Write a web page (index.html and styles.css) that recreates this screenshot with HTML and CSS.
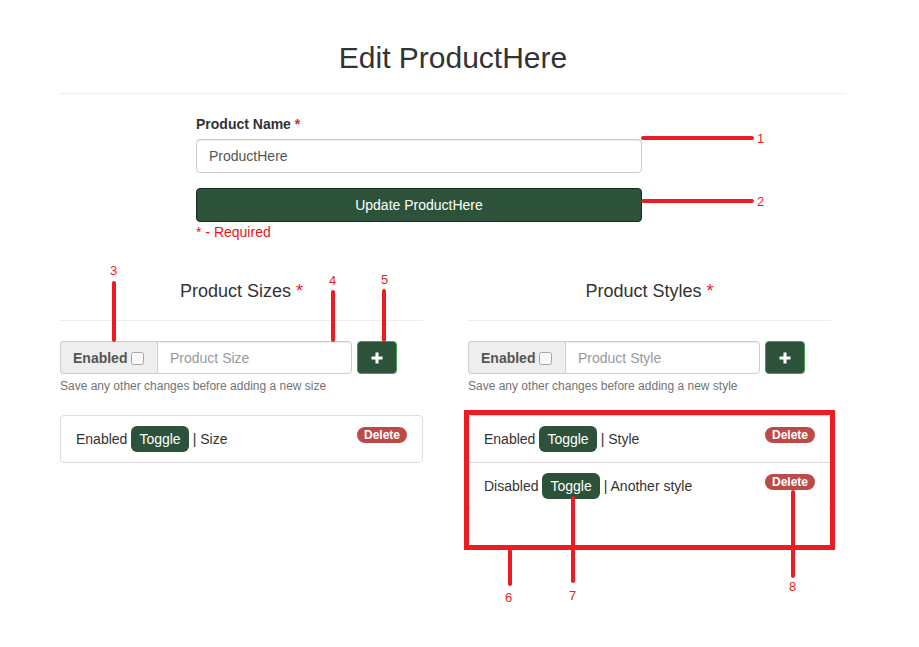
FILE: index.html
```html
<!DOCTYPE html>
<html>
<head>
<meta charset="utf-8">
<link rel="stylesheet" href="styles.css">
</head>
<body>
<div class="container">
  <div class="page-header"><h1>Edit ProductHere</h1></div>

  <div class="name-form">
    <label class="field-label">Product Name <span class="req">*</span></label>
    <input class="text-input" type="text" value="ProductHere">
    <button class="update-btn">Update ProductHere</button>
    <div class="req-note">* - Required</div>
  </div>

  <div class="columns">
    <div class="col">
      <h4 class="col-title">Product Sizes <span class="req">*</span></h4>
      <hr class="col-rule">
      <div class="add-row">
        <div class="input-group">
          <span class="addon">Enabled <input type="checkbox" class="chk"></span>
          <input class="group-input" type="text" placeholder="Product Size">
        </div>
        <button class="plus-btn"><svg width="14" height="14" viewBox="0 0 14 14"><path d="M7 1.5v11M1.5 7h11" stroke="#fff" stroke-width="3"/></svg></button>
      </div>
      <div class="help">Save any other changes before adding a new size</div>
      <ul class="list-group">
        <li class="list-item"><span>Enabled</span><button class="toggle-btn">Toggle</button><span>| Size</span><span class="badge">Delete</span></li>
      </ul>
    </div>
    <div class="col">
      <h4 class="col-title">Product Styles <span class="req">*</span></h4>
      <hr class="col-rule">
      <div class="add-row">
        <div class="input-group">
          <span class="addon">Enabled <input type="checkbox" class="chk"></span>
          <input class="group-input" type="text" placeholder="Product Style">
        </div>
        <button class="plus-btn"><svg width="14" height="14" viewBox="0 0 14 14"><path d="M7 1.5v11M1.5 7h11" stroke="#fff" stroke-width="3"/></svg></button>
      </div>
      <div class="help">Save any other changes before adding a new style</div>
      <ul class="list-group">
        <li class="list-item"><span>Enabled</span><button class="toggle-btn">Toggle</button><span>| Style</span><span class="badge">Delete</span></li>
        <li class="list-item"><span>Disabled</span><button class="toggle-btn">Toggle</button><span>| Another style</span><span class="badge">Delete</span></li>
      </ul>
    </div>
  </div>
</div>

<div class="ann hline" style="left:641px;top:136px;width:113px"></div>
<div class="ann-num" style="left:757px;top:131px">1</div>
<div class="ann hline" style="left:641px;top:199px;width:113px"></div>
<div class="ann-num" style="left:757px;top:194px">2</div>
<div class="ann vline" style="left:112px;top:281px;height:61px"></div>
<div class="ann-num" style="left:110px;top:263px">3</div>
<div class="ann vline" style="left:331px;top:290px;height:52px"></div>
<div class="ann-num" style="left:329px;top:273px">4</div>
<div class="ann vline" style="left:382px;top:289px;height:53px"></div>
<div class="ann-num" style="left:381px;top:272px">5</div>
<div class="ann-box"></div>
<div class="ann vline" style="left:508px;top:549px;height:37px"></div>
<div class="ann-num" style="left:505px;top:590px">6</div>
<div class="ann vline" style="left:571px;top:496px;height:87px"></div>
<div class="ann-num" style="left:569px;top:588px">7</div>
<div class="ann vline" style="left:791px;top:490px;height:88px"></div>
<div class="ann-num" style="left:789px;top:579px">8</div>
</body>
</html>
```

FILE: styles.css
```css
* { box-sizing: border-box; }
body {
  margin: 0;
  font-family: "Liberation Sans", Arial, sans-serif;
  font-size: 14px;
  line-height: 20px;
  color: #333;
  background: #fff;
}
.container {
  width: 786px;
  margin-left: 60px;
}
.page-header {
  padding-top: 41px;
  padding-bottom: 19px;
  border-bottom: 1px solid #eee;
}
.page-header h1 {
  margin: 0;
  font-size: 30px;
  font-weight: 400;
  line-height: 33px;
  text-align: center;
}
.name-form {
  width: 446px;
  margin-left: 136px;
  padding-top: 20px;
}
.field-label {
  display: block;
  font-weight: 700;
  margin-bottom: 5px;
}
.req { color: #e8201e; }
.text-input {
  display: block;
  width: 100%;
  height: 34px;
  padding: 6px 12px;
  font: inherit;
  color: #555;
  border: 1px solid #ccc;
  border-radius: 4px;
  box-shadow: inset 0 1px 1px rgba(0,0,0,.075);
  margin: 0 0 15px;
}
.update-btn {
  display: block;
  width: 100%;
  height: 34px;
  font: inherit;
  color: #fff;
  background: #2c533a;
  border: 1px solid #1a2a1f;
  border-radius: 4px;
  margin: 0;
}
.req-note {
  color: #ee1111;
}
.columns {
  display: flex;
  gap: 45px;
  margin-top: 39px;
}
.col { width: 363px; }
.col-title {
  margin: 0;
  font-size: 18px;
  font-weight: 400;
  line-height: 20px;
  text-align: center;
}
.col-rule {
  border: 0;
  border-top: 1px solid #eee;
  margin: 19px 0 20px;
}
.add-row {
  display: flex;
  gap: 5px;
}
.input-group {
  display: flex;
  height: 33px;
}
.addon {
  display: flex;
  align-items: center;
  width: 97px;
  padding: 0 10px 0 12px;
  background: #eee;
  border: 1px solid #ccc;
  border-right: 0;
  border-radius: 4px 0 0 4px;
  font-weight: 700;
  color: #555;
  white-space: nowrap;
}
.chk {
  width: 13px;
  height: 13px;
  margin: 1px 0 0 4px;
  opacity: 0.6;
}
.group-input {
  width: 195px;
  height: 33px;
  padding: 6px 12px;
  font: inherit;
  color: #555;
  border: 1px solid #ccc;
  border-radius: 0 4px 4px 0;
  box-shadow: inset 0 1px 1px rgba(0,0,0,.075);
}
.group-input::placeholder { color: #999; }
.plus-btn {
  width: 40px;
  height: 33px;
  padding: 0;
  display: flex;
  align-items: center;
  justify-content: center;
  background: #2c533a;
  border: 1px solid #46a046;
  border-radius: 4px;
}
.help {
  margin-top: 4px;
  font-size: 12px;
  line-height: 17px;
  color: #737373;
}
.list-group {
  list-style: none;
  margin: 20px 0 0;
  padding: 0;
}
.list-item {
  display: flex;
  align-items: center;
  gap: 4px;
  height: 48px;
  padding: 0 15px;
  border: 1px solid #ddd;
  margin-bottom: -1px;
}
.list-item:first-child { border-radius: 4px 4px 0 0; }
.list-item:last-child { border-radius: 0 0 4px 4px; }
.list-item:only-child { border-radius: 4px; }
.toggle-btn {
  font: inherit;
  font-size: 14px;
  color: #fff;
  background: #2c533a;
  border: 0;
  border-radius: 6px;
  height: 26px;
  padding: 0 8px;
  margin: 0;
}
.badge {
  align-self: flex-start;
  margin: 11px 0 0 auto;
  font-size: 12px;
  font-weight: 700;
  line-height: 12px;
  color: #fff;
  background: #bd4a47;
  border-radius: 10px;
  padding: 2px 7px;
}
.ann {
  position: absolute;
  background: #ed1c24;
  border-radius: 2px;
}
.hline { height: 4px; }
.vline { width: 4px; }
.ann-num {
  position: absolute;
  font-size: 13px;
  line-height: 16px;
  color: #ed1c24;
}
.ann-box {
  position: absolute;
  left: 464px;
  top: 410px;
  width: 371px;
  height: 140px;
  border: 5px solid #ed1c24;
}
```
